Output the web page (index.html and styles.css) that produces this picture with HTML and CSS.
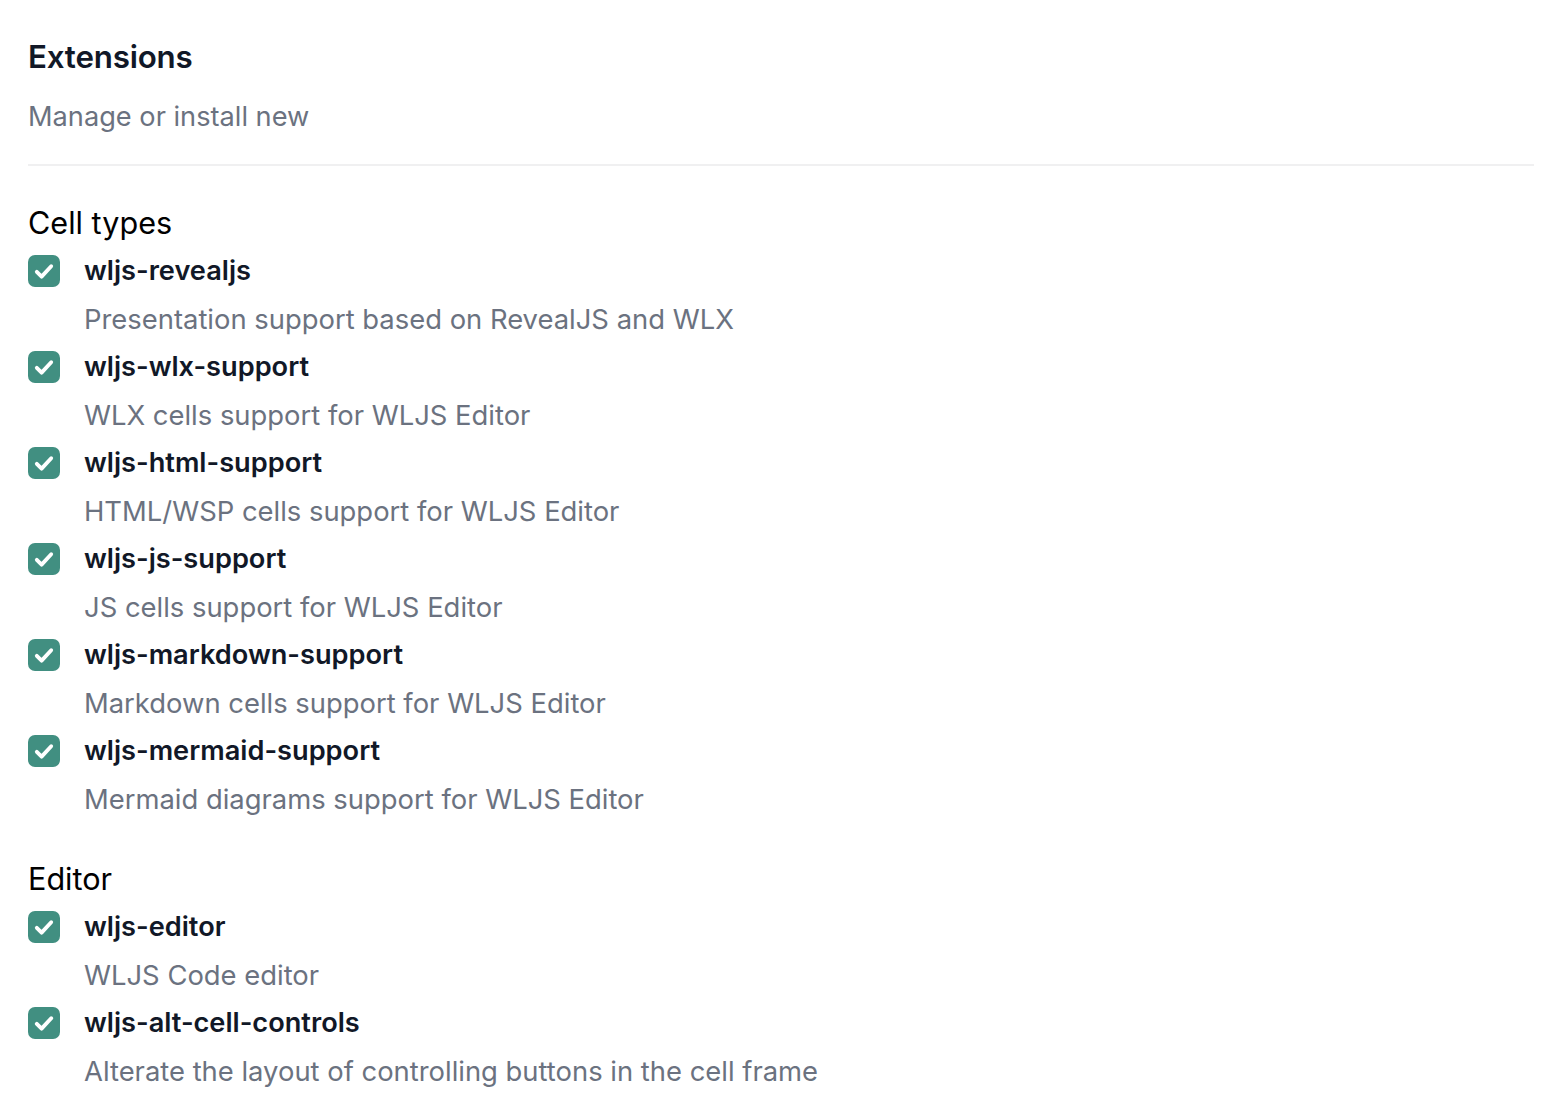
FILE: index.html
```html
<!DOCTYPE html>
<html>
<head>
<meta charset="utf-8">
<link rel="stylesheet" href="styles.css">
</head>
<body>
<div class="page">
  <header class="head">
    <h1 class="title">Extensions</h1>
    <p class="subtitle">Manage or install new</p>
  </header>

  <section class="group">
    <h2 class="group-title">Cell types</h2>
    <div class="item"><span class="check"><svg viewBox="0 0 20 20"><path d="M5.5 10.5l3 3 6-6.5"/></svg></span><div class="text"><div class="name">wljs-revealjs</div><div class="desc">Presentation support based on RevealJS and WLX</div></div></div>
    <div class="item"><span class="check"><svg viewBox="0 0 20 20"><path d="M5.5 10.5l3 3 6-6.5"/></svg></span><div class="text"><div class="name">wljs-wlx-support</div><div class="desc">WLX cells support for WLJS Editor</div></div></div>
    <div class="item"><span class="check"><svg viewBox="0 0 20 20"><path d="M5.5 10.5l3 3 6-6.5"/></svg></span><div class="text"><div class="name">wljs-html-support</div><div class="desc">HTML/WSP cells support for WLJS Editor</div></div></div>
    <div class="item"><span class="check"><svg viewBox="0 0 20 20"><path d="M5.5 10.5l3 3 6-6.5"/></svg></span><div class="text"><div class="name">wljs-js-support</div><div class="desc">JS cells support for WLJS Editor</div></div></div>
    <div class="item"><span class="check"><svg viewBox="0 0 20 20"><path d="M5.5 10.5l3 3 6-6.5"/></svg></span><div class="text"><div class="name">wljs-markdown-support</div><div class="desc">Markdown cells support for WLJS Editor</div></div></div>
    <div class="item"><span class="check"><svg viewBox="0 0 20 20"><path d="M5.5 10.5l3 3 6-6.5"/></svg></span><div class="text"><div class="name">wljs-mermaid-support</div><div class="desc">Mermaid diagrams support for WLJS Editor</div></div></div>
  </section>

  <section class="group">
    <h2 class="group-title">Editor</h2>
    <div class="item"><span class="check"><svg viewBox="0 0 20 20"><path d="M5.5 10.5l3 3 6-6.5"/></svg></span><div class="text"><div class="name">wljs-editor</div><div class="desc">WLJS Code editor</div></div></div>
    <div class="item"><span class="check"><svg viewBox="0 0 20 20"><path d="M5.5 10.5l3 3 6-6.5"/></svg></span><div class="text"><div class="name">wljs-alt-cell-controls</div><div class="desc">Alterate the layout of controlling buttons in the cell frame</div></div></div>
  </section>
</div>
</body>
</html>
```

FILE: styles.css
```css
* { box-sizing: border-box; }
html, body { margin: 0; padding: 0; background: #fff; }
body { font-family: Inter, "Noto Sans", sans-serif; }

.page {
  padding: 33px 28px 0 28px;
  display: flex;
  flex-direction: column;
}

.head {
  padding-bottom: 27px;
  border-bottom: 2px solid #f0f0f1;
}

.title {
  margin: 0;
  font-size: 31.3px;
  line-height: 48px;
  font-weight: 600;
  color: #111827;
  letter-spacing: -0.2px;
}

.subtitle {
  margin: 16px 0 0 0;
  font-size: 27.2px;
  line-height: 40px;
  color: #6b7280;
}

.group {
  margin-top: 33px;
  display: flex;
  flex-direction: column;
}

.group + .group { margin-top: 32px; }

.group-title {
  margin: 0;
  font-size: 30.6px;
  line-height: 48px;
  font-weight: 400;
  color: #000;
}

.item {
  display: flex;
  gap: 24px;
}

.check {
  flex: none;
  width: 32px;
  height: 32px;
  margin-top: 8px;
  border-radius: 7px;
  background: #418f81;
  display: flex;
  align-items: center;
  justify-content: center;
}

.check svg {
  width: 32px;
  height: 32px;
  fill: none;
  stroke: #fff;
  stroke-width: 2.4;
  stroke-linecap: round;
  stroke-linejoin: round;
}

.text { display: flex; flex-direction: column; }

.name {
  font-size: 27.2px;
  line-height: 48px;
  font-weight: 600;
  color: #111827;
}

.desc {
  font-size: 27.4px;
  line-height: 48px;
  color: #6b7280;
}
```
